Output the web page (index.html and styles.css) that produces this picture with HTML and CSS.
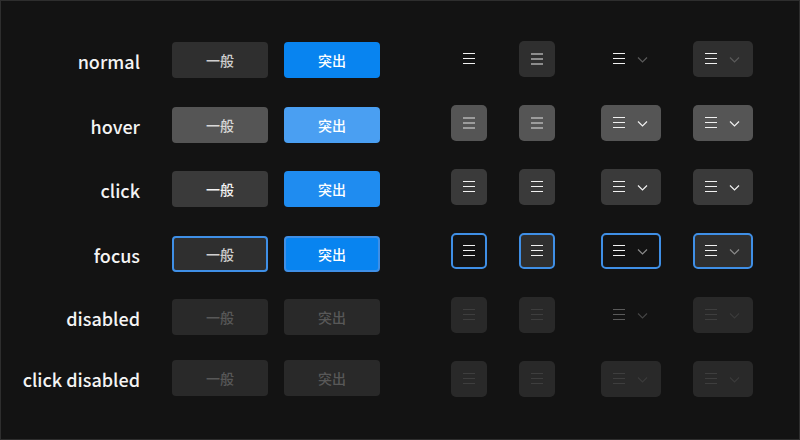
FILE: index.html
```html
<!DOCTYPE html>
<html>
<head>
<meta charset="utf-8">
<link rel="stylesheet" href="styles.css">
</head>
<body>
<div class="page">
  <div class="states">
    <div class="label">normal</div>
    <button class="btn">一般</button>
    <button class="btn primary">突出</button>

    <div class="label">hover</div>
    <button class="btn hover">一般</button>
    <button class="btn primary hover">突出</button>

    <div class="label">click</div>
    <button class="btn click">一般</button>
    <button class="btn primary click">突出</button>

    <div class="label">focus</div>
    <button class="btn focus">一般</button>
    <button class="btn primary focus">突出</button>

    <div class="label">disabled</div>
    <button class="btn disabled">一般</button>
    <button class="btn disabled">突出</button>

    <div class="label">click disabled</div>
    <button class="btn disabled">一般</button>
    <button class="btn disabled">突出</button>
  </div>

  <div class="icons">
    <!-- normal -->
    <div class="ib ghost"><svg width="36" height="36"><path class="ln" d="M12 12.5h12M12 17.5h12M12 22.5h12"/></svg></div>
    <div class="ib fill"><svg width="36" height="36"><path class="ln thick" d="M12 13h12M12 18h12M12 23h12"/></svg></div>
    <div class="ib dd ghost"><svg width="60" height="36"><path class="ln" d="M12 12.5h12M12 17.5h12M12 22.5h12"/><path class="chev" d="M37 16.5l4.5 4.5 4.5-4.5"/></svg></div>
    <div class="ib dd fill"><svg width="60" height="36"><path class="ln" d="M12 12.5h12M12 17.5h12M12 22.5h12"/><path class="chev" d="M37 16.5l4.5 4.5 4.5-4.5"/></svg></div>

    <!-- hover -->
    <div class="ib hover"><svg width="36" height="36"><path class="ln thick" d="M12 13h12M12 18h12M12 23h12"/></svg></div>
    <div class="ib hover"><svg width="36" height="36"><path class="ln thick" d="M12 13h12M12 18h12M12 23h12"/></svg></div>
    <div class="ib dd hover"><svg width="60" height="36"><path class="ln" d="M12 12.5h12M12 17.5h12M12 22.5h12"/><path class="chev" d="M37 16.5l4.5 4.5 4.5-4.5"/></svg></div>
    <div class="ib dd hover"><svg width="60" height="36"><path class="ln" d="M12 12.5h12M12 17.5h12M12 22.5h12"/><path class="chev" d="M37 16.5l4.5 4.5 4.5-4.5"/></svg></div>

    <!-- click -->
    <div class="ib click"><svg width="36" height="36"><path class="ln" d="M12 12.5h12M12 17.5h12M12 22.5h12"/></svg></div>
    <div class="ib click"><svg width="36" height="36"><path class="ln" d="M12 12.5h12M12 17.5h12M12 22.5h12"/></svg></div>
    <div class="ib dd click"><svg width="60" height="36"><path class="ln" d="M12 12.5h12M12 17.5h12M12 22.5h12"/><path class="chev" d="M37 16.5l4.5 4.5 4.5-4.5"/></svg></div>
    <div class="ib dd click"><svg width="60" height="36"><path class="ln" d="M12 12.5h12M12 17.5h12M12 22.5h12"/><path class="chev" d="M37 16.5l4.5 4.5 4.5-4.5"/></svg></div>

    <!-- focus -->
    <div class="ib ghost focus"><svg width="32" height="32"><path class="ln" d="M10 10.5h12M10 15.5h12M10 20.5h12"/></svg></div>
    <div class="ib fill focus"><svg width="32" height="32"><path class="ln" d="M10 10.5h12M10 15.5h12M10 20.5h12"/></svg></div>
    <div class="ib dd ghost focus"><svg width="56" height="32"><path class="ln" d="M10 10.5h12M10 15.5h12M10 20.5h12"/><path class="chev" d="M35 14.5l4.5 4.5 4.5-4.5"/></svg></div>
    <div class="ib dd fill focus"><svg width="56" height="32"><path class="ln" d="M10 10.5h12M10 15.5h12M10 20.5h12"/><path class="chev" d="M35 14.5l4.5 4.5 4.5-4.5"/></svg></div>

    <!-- disabled -->
    <div class="ib dis"><svg width="36" height="36"><path class="ln" d="M12 12.5h12M12 17.5h12M12 22.5h12"/></svg></div>
    <div class="ib dis"><svg width="36" height="36"><path class="ln" d="M12 12.5h12M12 17.5h12M12 22.5h12"/></svg></div>
    <div class="ib dd ghost dis"><svg width="60" height="36"><path class="ln" d="M12 12.5h12M12 17.5h12M12 22.5h12"/><path class="chev" d="M37 16.5l4.5 4.5 4.5-4.5"/></svg></div>
    <div class="ib dd dis"><svg width="60" height="36"><path class="ln" d="M12 12.5h12M12 17.5h12M12 22.5h12"/><path class="chev" d="M37 16.5l4.5 4.5 4.5-4.5"/></svg></div>

    <!-- click disabled -->
    <div class="ib dis"><svg width="36" height="36"><path class="ln" d="M12 12.5h12M12 17.5h12M12 22.5h12"/></svg></div>
    <div class="ib dis"><svg width="36" height="36"><path class="ln" d="M12 12.5h12M12 17.5h12M12 22.5h12"/></svg></div>
    <div class="ib dd dis"><svg width="60" height="36"><path class="ln" d="M12 12.5h12M12 17.5h12M12 22.5h12"/><path class="chev" d="M37 16.5l4.5 4.5 4.5-4.5"/></svg></div>
    <div class="ib dd dis"><svg width="60" height="36"><path class="ln" d="M12 12.5h12M12 17.5h12M12 22.5h12"/><path class="chev" d="M37 16.5l4.5 4.5 4.5-4.5"/></svg></div>
  </div>
</div>
</body>
</html>
```

FILE: styles.css
```css
* { box-sizing: border-box; }
html, body { margin: 0; padding: 0; background: #131313; }
body {
  font-family: "Noto Sans CJK SC", "Noto Sans", sans-serif;
  color: #f2f2f2;
}
.page {
  width: 800px;
  height: 440px;
  border: 1px solid #2e2e2e;
  display: flex;
  align-items: flex-start;
}

/* left: labels + text buttons */
.states {
  margin-top: 41px;
  display: grid;
  grid-template-columns: 155px 96px 96px;
  grid-template-rows: 65px 64px 65px 63px 61px 36px;
  column-gap: 16px;
  align-items: start;
}
.label {
  height: 36px;
  display: flex;
  align-items: center;
  justify-content: flex-end;
  padding-right: 16px;
  padding-top: 2px;
  font-size: 18px;
  font-weight: 500;
  color: #f4f4f4;
  white-space: nowrap;
}
.btn {
  width: 96px;
  height: 36px;
  border: none;
  border-radius: 4px;
  padding: 0;
  font-family: "Noto Sans CJK SC", sans-serif;
  font-size: 14px;
  font-weight: 500;
  background: #2f2f2f;
  color: #cfcfcf;
}
.btn.hover { background: #555555; color: #d8d8d8; }
.btn.click { background: #3a3a3a; color: #f4f4f4; }
.btn.focus { border: 2px solid #3f8fe6; color: #cfcfcf; }
.btn.primary { background: #0884f0; color: #ffffff; }
.btn.primary.hover { background: #4a9ff2; }
.btn.primary.click { background: #1f8cf0; }
.btn.primary.focus { background: #0884f0; border: 2px solid #3f8fe6; }
.btn.disabled { background: #292929; color: #585858; }

/* right: icon buttons */
.icons {
  margin-top: 40px;
  margin-left: 71px;
  display: grid;
  grid-template-columns: 36px 36px 74px 60px;
  grid-auto-rows: 36px;
  row-gap: 28px;
  column-gap: 32px;
}
.ib {
  width: 36px;
  height: 36px;
  border-radius: 5px;
  background: transparent;
  color: #f0f0f0;
  --chev: #5a5a5a;
}
.ib.dd { width: 60px; justify-self: end; }
.ib svg { display: block; }
.ln { stroke: currentColor; stroke-width: 1; fill: none; }
.ln.thick { stroke-width: 2; }
.chev { stroke: var(--chev); stroke-width: 1.2; fill: none; }

.ib.fill { background: #2f2f2f; }
.ib.fill > svg .thick { stroke: #8c8c8c; }
.ib.hover { background: #555555; --chev: #f0f0f0; }
.ib.hover .thick { stroke: #9c9c9c; }
.ib.click { background: #3a3a3a; --chev: #f0f0f0; }
.ib.focus { border: 2px solid #3f8fe6; --chev: #8a8a8a; }
.ib.dis { background: #292929; color: #3e3e3e; --chev: #3a3a3a; }
.ib.ghost.dis { background: transparent; color: #5a5a5a; --chev: #444444; }
```
